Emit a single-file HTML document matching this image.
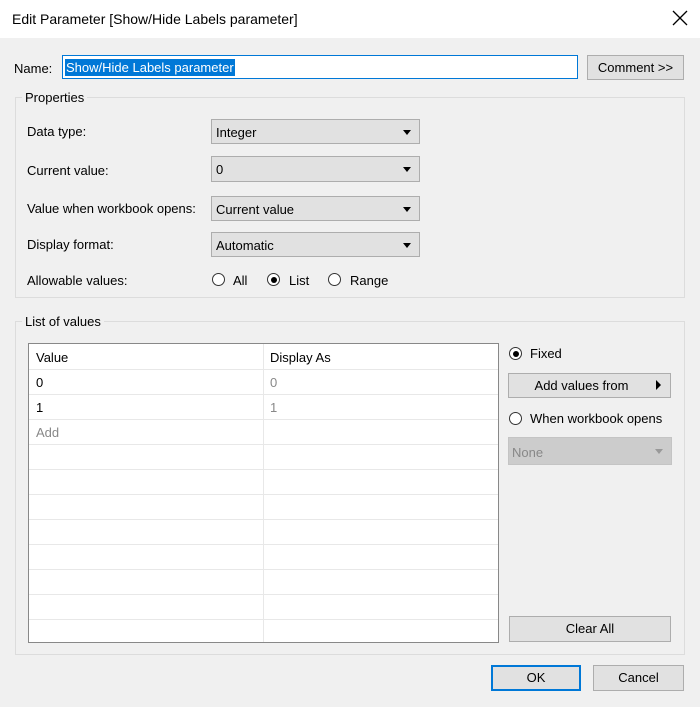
<!DOCTYPE html>
<html><head><style>
body{margin:0;width:700px;height:707px;background:#f0f0f0;font-family:"Liberation Sans",sans-serif;font-size:13px;color:#000;position:relative;overflow:hidden}
.a{position:absolute}
.title{left:0;top:0;width:700px;height:38px;background:#fff}
.sel{background:#e1e1e1;border:1px solid #adadad;box-sizing:border-box}
.sel span{position:absolute;left:4px;top:5px}
.sel i{position:absolute;right:8px;top:10px;width:0;height:0;border-left:4px solid transparent;border-right:4px solid transparent;border-top:5px solid #000}
.btn{background:#e1e1e1;border:1px solid #adadad;box-sizing:border-box;text-align:center}
.grp{border:1px solid #dcdcdc;box-sizing:border-box}
.radio{width:13px;height:13px;border:1px solid #333;border-radius:50%;background:#fff;box-sizing:border-box}
.radio.on::after{content:"";position:absolute;left:2.5px;top:2.5px;width:6px;height:6px;border-radius:50%;background:#000}
.hl{left:0;width:469px;height:1px;background:#e8e8e8}
</style></head><body>
<div class="a title"></div>
<div class="a" style="left:12px;top:11px;font-size:14px">Edit Parameter [Show/Hide Labels parameter]</div>
<svg class="a" style="left:672px;top:10px" width="16" height="16"><path d="M1 1L15 15M15 1L1 15" stroke="#000" stroke-width="1.3"/></svg>
<div class="a" style="left:14px;top:61px">Name:</div>
<div class="a" style="left:62px;top:55px;width:516px;height:24px;background:#fff;border:1px solid #0078d7;box-sizing:border-box"></div>
<div class="a" style="left:65px;top:59px;background:#0078d7;color:#fff;padding:1px 1px">Show/Hide Labels parameter</div>
<div class="a btn" style="left:587px;top:55px;width:97px;height:25px;line-height:23px">Comment &gt;&gt;</div>
<div class="a grp" style="left:15px;top:97px;width:670px;height:201px"></div>
<div class="a" style="left:22px;top:90px;background:#f0f0f0;padding:0 3px">Properties</div>
<div class="a" style="left:27px;top:124px">Data type:</div>
<div class="a sel" style="left:211px;top:119px;width:209px;height:25px"><span>Integer</span><i></i></div>
<div class="a" style="left:27px;top:163px">Current value:</div>
<div class="a sel" style="left:211px;top:156px;width:209px;height:26px"><span>0</span><i></i></div>
<div class="a" style="left:27px;top:201px">Value when workbook opens:</div>
<div class="a sel" style="left:211px;top:196px;width:209px;height:25px"><span>Current value</span><i></i></div>
<div class="a" style="left:27px;top:237px">Display format:</div>
<div class="a sel" style="left:211px;top:232px;width:209px;height:25px"><span>Automatic</span><i></i></div>
<div class="a" style="left:27px;top:273px">Allowable values:</div>
<div class="a radio" style="left:212px;top:273px"></div><div class="a" style="left:233px;top:273px">All</div>
<div class="a radio on" style="left:267px;top:273px"></div><div class="a" style="left:289px;top:273px">List</div>
<div class="a radio" style="left:328px;top:273px"></div><div class="a" style="left:350px;top:273px">Range</div>
<div class="a grp" style="left:15px;top:321px;width:670px;height:334px"></div>
<div class="a" style="left:22px;top:314px;background:#f0f0f0;padding:0 3px">List of values</div>
<div class="a" style="left:28px;top:343px;width:471px;height:300px;background:#fff;border:1px solid #888;box-sizing:border-box;overflow:hidden">
<div class="a" style="left:234px;top:0;width:1px;height:298px;background:#e8e8e8"></div>
<div class="a hl" style="top:25px"></div><div class="a hl" style="top:50px"></div><div class="a hl" style="top:75px"></div><div class="a hl" style="top:100px"></div><div class="a hl" style="top:125px"></div><div class="a hl" style="top:150px"></div><div class="a hl" style="top:175px"></div><div class="a hl" style="top:200px"></div><div class="a hl" style="top:225px"></div><div class="a hl" style="top:250px"></div><div class="a hl" style="top:275px"></div>
<div class="a" style="left:7px;top:6px">Value</div><div class="a" style="left:241px;top:6px">Display As</div>
<div class="a" style="left:7px;top:31px">0</div><div class="a" style="left:241px;top:31px;color:#888">0</div>
<div class="a" style="left:7px;top:56px">1</div><div class="a" style="left:241px;top:56px;color:#888">1</div>
<div class="a" style="left:7px;top:81px;color:#888">Add</div>
</div>
<div class="a radio on" style="left:509px;top:347px"></div><div class="a" style="left:530px;top:346px">Fixed</div>
<div class="a btn" style="left:508px;top:373px;width:163px;height:25px;line-height:23px;padding-right:16px">Add values from</div>
<div class="a" style="left:656px;top:380px;border-top:5px solid transparent;border-bottom:5px solid transparent;border-left:5px solid #000"></div>
<div class="a radio" style="left:509px;top:412px"></div><div class="a" style="left:530px;top:411px">When workbook opens</div>
<div class="a" style="left:508px;top:437px;width:164px;height:28px;background:#ccc;border:1px solid #c4c4c4;box-sizing:border-box"><span class="a" style="left:3px;top:7px;color:#888">None</span><i class="a" style="right:8px;top:11px;border-left:4px solid transparent;border-right:4px solid transparent;border-top:5px solid #999"></i></div>
<div class="a btn" style="left:509px;top:616px;width:162px;height:26px;line-height:24px">Clear All</div>
<div class="a btn" style="left:491px;top:665px;width:90px;height:26px;line-height:22px;border:2px solid #0078d7">OK</div>
<div class="a btn" style="left:593px;top:665px;width:91px;height:26px;line-height:24px">Cancel</div>
</body></html>
